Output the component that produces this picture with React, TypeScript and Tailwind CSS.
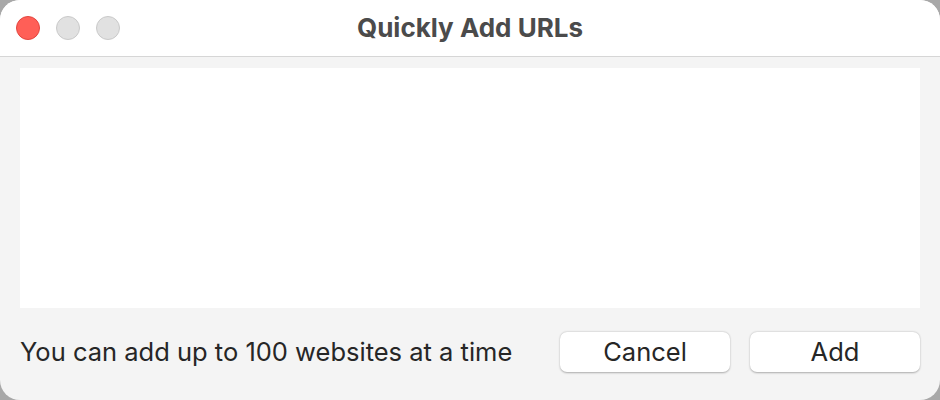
import React from 'react';

const Light: React.FC<{ red?: boolean }> = ({ red }) => (
  <span
    className={
      red
        ? 'block h-6 w-6 rounded-full border border-[#e2463f] bg-[#ff5f57]'
        : 'block h-6 w-6 rounded-full border border-[#c9c9c9] bg-[#e1e1e1]'
    }
  />
);

const App: React.FC = () => {
  return (
    <div className="h-[400px] w-[940px] bg-[#a8a8a8]" style={{ fontFamily: 'Inter, "Noto Sans", sans-serif' }}>
      <div className="flex h-full w-full flex-col overflow-hidden rounded-[20px] bg-[#f4f4f4]">
        <div className="relative flex h-[57px] shrink-0 items-center justify-center border-b border-[#d6d6d6] bg-white">
          <div className="absolute left-4 top-4 flex gap-4">
            <Light red />
            <Light />
            <Light />
          </div>
          <h1 className="text-[26px] font-bold leading-none text-[#4b4b4b]">Quickly Add URLs</h1>
        </div>
        <div className="flex flex-1 flex-col px-5 pt-[11px]">
          <textarea className="h-[240px] w-full resize-none bg-white outline-none" />
          <div className="mt-6 flex items-center">
            <p className="flex-1 text-[25.5px] leading-none text-[#262626]">You can add up to 100 websites at a time</p>
            <div className="flex gap-5">
              <button className="h-10 w-[170px] rounded-[7px] bg-white text-[25.5px] leading-none text-[#262626] shadow-[0_0.5px_2px_rgba(0,0,0,0.3)]">
                Cancel
              </button>
              <button className="h-10 w-[170px] rounded-[7px] bg-white text-[25.5px] leading-none text-[#262626] shadow-[0_0.5px_2px_rgba(0,0,0,0.3)]">
                Add
              </button>
            </div>
          </div>
        </div>
      </div>
    </div>
  );
};

export default App;
